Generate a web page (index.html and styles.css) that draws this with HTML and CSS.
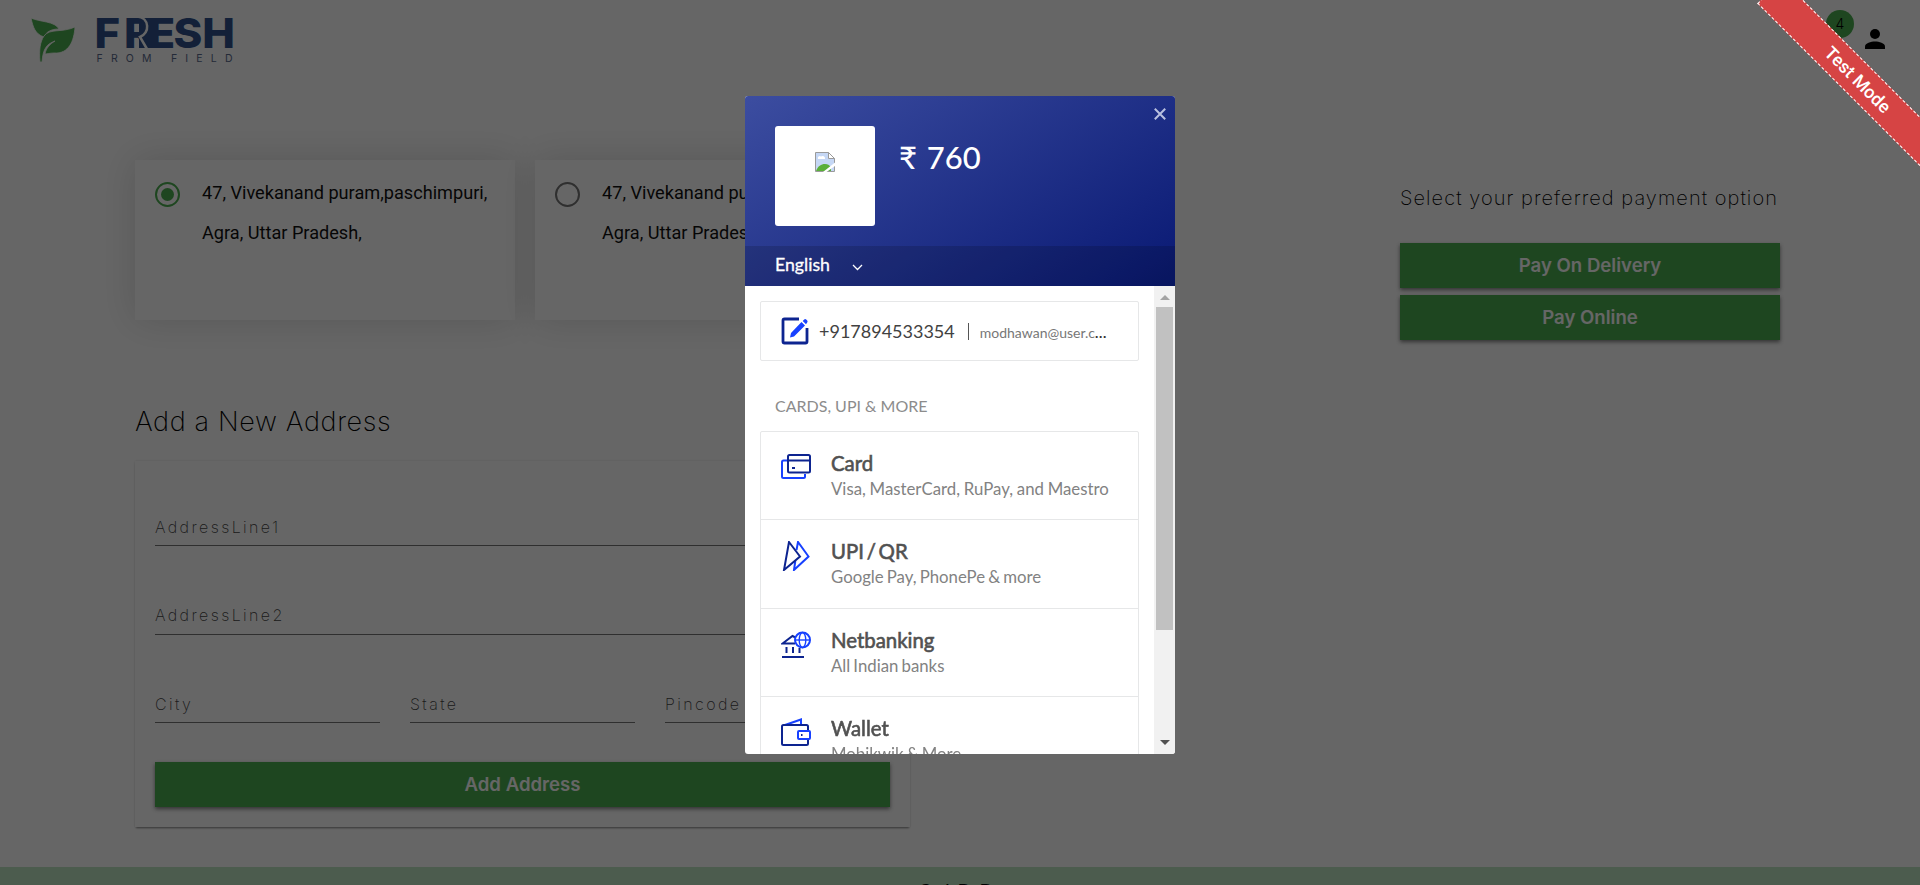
FILE: index.html
```html
<!DOCTYPE html>
<html lang="en">
<head>
<meta charset="utf-8">
<title>Fresh From Field – Checkout</title>
<link rel="stylesheet" href="styles.css">
</head>
<body>
<div class="page">
  <header class="topbar">
    <svg class="logo" width="230" height="70" viewBox="20 0 230 70">
      <g class="leaf">
        <path d="M31 18c8 4 24 3 28 11-8 0-13 3-15 8-9-3-11-10-13-19z"/>
        <path d="M75 27c-1 14-6 27-21 26-4 0-7 1-9 1 1-6 5-10 10-13-8 3-12 7-13 21h-2c-1-12 0-20 4-26 6-8 18-3 31-9z"/>
      </g>
      <rect class="brand-join" x="139" y="18" width="15" height="30"/>
      <text class="brand" transform="scale(1.06 1)" x="89.200 117 140.100 163.800 190.900" y="48">FRESH</text>
      <path class="brand-cut" d="M137 16.500c13 1 13 17 3 20.500L147 49"/>
      <text class="tagline" x="96.500" y="62" textLength="136">FROM FIELD</text>
    </svg>
    <div class="account">
      <span class="cart-count">4</span>
      <svg class="person" width="20" height="20" viewBox="0 0 20 20"><circle cx="10" cy="5" r="5"/><path d="M0 20v-2.500c0-3.300 6-5 10-5s10 1.700 10 5V20z"/></svg>
    </div>
  </header>
  <main class="checkout">
    <section class="addresses">
      <div class="saved">
        <article class="address-card"><span class="radio checked"></span><p>47, Vivekanand puram,paschimpuri,<br>Agra, Uttar Pradesh,</p></article>
        <article class="address-card"><span class="radio"></span><p>47, Vivekanand puram,paschimpuri,<br>Agra, Uttar Pradesh,</p></article>
      </div>
      <h2 class="form-title">Add a New Address</h2>
      <form class="address-form">
        <div class="field">AddressLine1</div>
        <div class="field">AddressLine2</div>
        <div class="field-row"><div class="field">City</div><div class="field">State</div><div class="field">Pincode</div></div>
        <button type="button" class="btn">Add Address</button>
      </form>
    </section>
    <aside class="payment">
      <h3 class="payment-title">Select your preferred payment option</h3>
      <button type="button" class="btn">Pay On Delivery</button>
      <button type="button" class="btn">Pay Online</button>
    </aside>
  </main>
  <footer class="footer"><span>Gol D D</span></footer>
</div>
<div class="backdrop">
  <div class="ribbon">Test Mode</div>
  <div class="modal">
    <div class="modal-head">
      <div class="merchant">
        <div class="merchant-logo">
          <svg width="20" height="20" viewBox="0 0 20 20"><path d="M.5.500h13l6 6v13H.5z" fill="#c5d7f5" stroke="#9a9a9a"/><path d="M3 7a2 2 0 0 1 3-2.500A2.500 2.500 0 0 1 10 7z" fill="#fff"/><path d="M1 19c2-5 5-7 9-7 3 0 4 1 6 3v4z" fill="#5aaf3a"/><path d="M13.500.500v6h6z" fill="#fff" stroke="#9a9a9a"/><path d="M20 10.500v3.500L11.500 20H8z" fill="#fff"/></svg>
        </div>
        <div class="amount">₹ 760</div>
      </div>
      <svg class="close" width="12" height="12" viewBox="0 0 12 12"><path d="M.8.800l10.400 10.400M11.200.800L.8 11.200"/></svg>
      <div class="language"><span>English</span><svg width="11" height="7" viewBox="0 0 11 7"><path d="M1 1l4.500 4.500L10 1"/></svg></div>
    </div>
    <div class="modal-body">
      <div class="methods">
        <div class="contact">
          <svg width="28" height="28" viewBox="0 0 28 28"><path d="M18 2H3.500Q2 2 2 3.500v21Q2 26 3.500 26h21q1.500 0 1.500-1.500V11" fill="none" stroke="#0d2490" stroke-width="2.800"/><path d="M9 20.500l1-4.500L20.500 5l3.500 3.500L13 19.500zM21.700 4l1.500-1.500q1-.8 2 0l1 1q.8 1 0 2L25 7.200z" fill="#1741ff"/></svg>
          <span class="phone">+917894533354</span><span class="bar"></span><span class="email">modhawan@user.c<b>...</b></span>
        </div>
        <div class="group-title">CARDS, UPI &amp; MORE</div>
        <div class="method-list">
          <div class="method">
            <svg class="icon" width="30" height="30" viewBox="0 0 30 30"><path class="light" d="M6 6.500H2.500Q1 6.500 1 8v14.500Q1 24 2.500 24h20q1.500 0 1.500-1.500V20"/><rect class="dark" x="7" y="1" width="22" height="17.500" rx="1.500"/><path class="dark" d="M7 6.500h22M11 14h3"/></svg>
            <div><h4>Card</h4><p class="wide">Visa, MasterCard, RuPay, and Maestro</p></div>
          </div>
          <div class="method">
            <svg class="icon upi" width="30" height="30" viewBox="0 0 30 30"><path class="light" d="M15.500 9L17 1l10.500 14.500L13 29l1.300-9"/><path class="dark" d="M8 1l11 14.500L3 29z"/></svg>
            <div><h4>UPI / QR</h4><p>Google Pay, PhonePe &amp; more</p></div>
          </div>
          <div class="method">
            <svg class="icon" width="30" height="30" viewBox="0 0 30 30"><path class="dark" d="M14 12.500H1.500L11.500 5l3 1.500M5.500 16v6M12 16v6M18.500 17v5M1 26h22"/><circle class="light" cx="21.500" cy="9" r="7.500"/><ellipse class="light thin" cx="21.500" cy="9" rx="3.300" ry="7.500"/><path class="light thin" d="M14 9h15"/></svg>
            <div><h4>Netbanking</h4><p>All Indian banks</p></div>
          </div>
          <div class="method">
            <svg class="icon wallet" width="30" height="30" viewBox="0 0 30 30"><path class="light" d="M4 7L20 1.500V7"/><path class="dark" d="M27 12V8.500Q27 7 25.500 7h-23Q1 7 1 8.500v17Q1 27 2.500 27h23q1.500 0 1.500-1.500V22"/><rect class="light" x="17" y="13" width="12" height="8" rx="1"/><path class="dark" d="M20 17h1.500"/></svg>
            <div><h4>Wallet</h4><p>Mobikwik &amp; More</p></div>
          </div>
        </div>
      </div>
      <div class="scrollbar">
        <span class="arrow up"></span><span class="thumb"></span><span class="arrow down"></span>
      </div>
    </div>
  </div>
</div>
</body>
</html>
```

FILE: styles.css
```css
* { box-sizing: border-box; }
body, h2, h3, h4, p { margin: 0; font-weight: 400; }
body { overflow: hidden; height: 885px; background: #fff; font-family: Inter, "Liberation Sans", sans-serif; color: #000; }

.page { height: 885px; overflow: hidden; }
.topbar { height: 90px; padding: 0 35px 0 20px; display: flex; justify-content: space-between; align-items: flex-start; }
.leaf { fill: #4caf50; }
.leaf path { stroke: #fff; stroke-width: .8; }
.brand { font: 800 41.200px Inter, sans-serif; }
.brand, .brand-join { fill: #30528c; }
.brand-cut { fill: none; stroke: #fff; stroke-width: 2.500; }
.tagline { fill: #5a6a8c; font: 400 10.500px Inter, sans-serif; }
.account { display: flex; align-items: flex-start; gap: 11px; margin-top: 10px; }
.cart-count { width: 28px; height: 28px; border-radius: 50%; background: #4caf50; font-size: 14px; font-weight: 300; line-height: 27px; text-align: center; }
.person { margin-top: 19px; }

.checkout { display: flex; justify-content: space-between; height: 777px; padding: 70px 140px 0 135px; }
.addresses { width: 775px; }
.saved { display: flex; gap: 20px; }
.address-card { flex: 0 0 380px; height: 160px; display: flex; padding: 13px 20px; box-shadow: 0 0 35px rgba(0,0,0,.14); background: #fff; font: 400 18.150px/40px Roboto, sans-serif; color: #111; white-space: nowrap; }
.radio { flex: none; width: 25px; height: 25px; margin: 9px 22px 0 0; border: 2px solid #757575; border-radius: 50%; display: grid; place-items: center; }
.radio.checked { border-color: #4caf50; }
.radio.checked::after { content: ""; width: 13px; height: 13px; border-radius: 50%; background: #4caf50; }
.form-title { margin-top: 80px; height: 61px; font-size: 27px; font-weight: 200; line-height: 43px; letter-spacing: .65px; }
.address-form { height: 366px; padding: 43px 20px 20px; box-shadow: 0 2px 2px -1px rgba(0,0,0,.45), 0 0 2px rgba(0,0,0,.12); }
.field { height: 42px; margin-bottom: 47px; border-bottom: 1px solid #777; color: #444; font-size: 16px; font-weight: 200; line-height: 46px; letter-spacing: 2.400px; }
.field + .field { line-height: 44px; }
.field-row { display: grid; grid-template-columns: repeat(3, 1fr); gap: 30px; }
.field-row .field { height: 41px; margin-bottom: 39px; line-height: 44px; }
.btn { display: block; width: 100%; height: 45px; padding: 0 0 2px; border: 0; background: #4caf50; color: #fff; font: 600 18.600px Inter, sans-serif; box-shadow: 0 2px 4px rgba(0,0,0,.5); }
.payment { width: 380px; padding-top: 21px; }
.payment-title { height: 62px; font-size: 20px; font-weight: 200; line-height: 34px; letter-spacing: 1.050px; white-space: nowrap; }
.payment .btn + .btn { margin-top: 7px; }
.footer { height: 18px; overflow: hidden; background: #bfe6c4; text-align: center; padding: 12px 8px 0 0; font-size: 20px; line-height: 26px; word-spacing: 2px; }

.backdrop { position: fixed; inset: 0; overflow: hidden; background: rgba(0,0,0,.6); display: flex; justify-content: center; align-items: flex-start; padding-top: 96px; }
.ribbon { position: absolute; top: 62px; right: -63px; width: 250px; height: 35px; transform: rotate(45deg); border: 1px dashed #fff; background: #d64444; color: #fff; font: 500 18px/33px Roboto, sans-serif; text-align: center; }
.modal { width: 430px; height: 658px; border-radius: 3px; overflow: hidden; background: #fff; font-family: Lato, sans-serif; color: #414141; }
.modal-head { position: relative; height: 190px; background: linear-gradient(148deg, #3c4da0 0%, #0d1d77 92%, #091a70 100%); color: #fff; }
.merchant { height: 150px; padding: 30px; display: flex; gap: 24px; }
.merchant-logo { width: 100px; height: 100px; padding-top: 26px; border-radius: 3px; background: #fff; text-align: center; line-height: 0; }
.amount { font-size: 31px; line-height: 62px; font-weight: 500; word-spacing: 2px; white-space: nowrap; }
.close { position: absolute; top: 12px; right: 9px; fill: none; stroke: #b9c0df; stroke-width: 2; }
.language { height: 40px; padding: 0 30px; display: flex; align-items: center; gap: 22px; background: rgba(0,0,0,.15); font-size: 17.700px; line-height: 36px; -webkit-text-stroke: .3px; }
.language span { margin-top: -3px; }
.language svg { margin-top: 3px; fill: none; stroke: #fff; stroke-width: 1.300; }
.modal-body { display: flex; height: 468px; }
.methods { flex: 1; overflow: hidden; padding: 15px 15px 0; }
.contact { height: 60px; border: 1px solid #e6e7e8; border-radius: 2px; padding-left: 20px; display: flex; align-items: center; white-space: nowrap; }
.phone { margin-left: 10px; font-size: 18px; }
.bar { width: 1px; height: 17px; margin: 0 11px 0 13px; background: #555; }
.email { color: #777; font-size: 14px; padding-top: 2px; }
.email b { color: #333; letter-spacing: .7px; }
.group-title { height: 70px; padding: 33px 15px 0; color: #8c8c8c; font-size: 16px; line-height: 24px; }
.method-list { border: 1px solid #e6e7e8; border-radius: 2px; }
.method { display: flex; gap: 20px; height: 88.330px; padding: 18px 20px 0; border-bottom: 1px solid #e6e7e8; white-space: nowrap; }
.icon { flex: none; margin-top: 4px; fill: none; stroke-width: 2; }
.icon.upi, .icon.wallet { margin-top: 3px; }
.icon .light { stroke: #1741ff; }
.icon .dark { stroke: #0d2490; }
.icon .thin { stroke-width: 1.400; }
.method h4 { font-size: 20.400px; line-height: 26px; color: #515151; word-spacing: -2.500px; -webkit-text-stroke: .6px; }
.method p { margin-top: 2px; font-size: 16.800px; line-height: 22px; color: #828282; word-spacing: -1.200px; }
.method p.wide { word-spacing: -.5px; }
.scrollbar { width: 21px; background: #f1f1f1; display: flex; flex-direction: column; align-items: center; padding: 9px 0; }
.arrow { border: 5px solid transparent; border-top: 0; border-bottom-color: #a3a3a3; }
.thumb { width: 17px; height: 323px; margin-top: 7px; background: #c1c1c1; }
.arrow.down { margin-top: auto; border: 5px solid transparent; border-bottom: 0; border-top-color: #505050; }
```
